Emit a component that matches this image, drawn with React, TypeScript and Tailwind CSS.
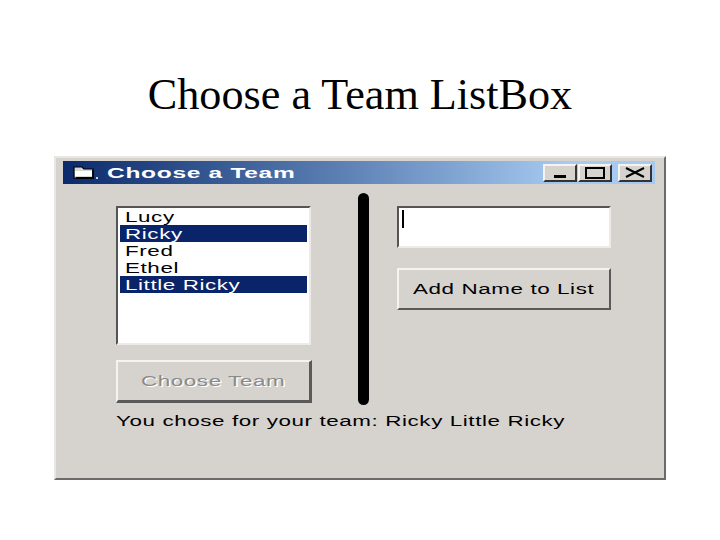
import React from "react";

const names = [
  { label: "Lucy", selected: false },
  { label: "Ricky", selected: true },
  { label: "Fred", selected: false },
  { label: "Ethel", selected: false },
  { label: "Little Ricky", selected: true },
];

const raised =
  "border-2 border-t-[#f4f3f0] border-l-[#f4f3f0] border-r-[#5a5a5a] border-b-[#5a5a5a] bg-[#d6d3cf]";
const sunken =
  "border-2 border-t-[#555555] border-l-[#555555] border-r-[#eeebe6] border-b-[#eeebe6] bg-white";
const font = "font-['Liberation_Sans',sans-serif] text-[14px]";
// the old dialog text is stretched sideways in the screenshot
const stretch = "inline-block whitespace-nowrap scale-x-[1.6] tracking-[0.37px]";

const CaptionButton = ({ children }: { children: React.ReactNode }) => (
  <div className={`flex h-[18px] w-[34px] items-center justify-center ${raised} border-b-[#333333] border-r-[#333333]`}>
    {children}
  </div>
);

const App = () => {
  return (
    <div className="h-[540px] w-[720px] overflow-hidden bg-white">
      <h1 className="pt-[66px] text-center font-['Liberation_Serif',serif] text-[44.2px] leading-[58px] text-black">
        Choose a Team ListBox
      </h1>

      <div className="ml-[54px] mt-[32px] h-[324px] w-[612px] border-2 border-t-[#e9e7e3] border-l-[#e9e7e3] border-r-[#6a6a6a] border-b-[#6a6a6a] bg-[#d6d3cf] pl-[7px] pr-[9px] pt-[3px]">
        {/* title bar */}
        <div className="flex h-[23px] items-center justify-between bg-gradient-to-r from-[#0c2a6b] to-[#a6caf0] to-85% pl-[10px] pr-[3px]">
          <div className="flex items-center gap-[9px]">
            <svg width="25" height="13" viewBox="0 0 25 13">
              <path d="M1 1h8l2 2h9v9H1z" fill="#d8d8d8" stroke="#000000" strokeWidth="1.2" />
              <path d="M2 5h17v5H2z" fill="#ffffff" />
              <path d="M20 4v8M3 12h18" stroke="#000000" strokeWidth="1.8" />
              <rect x="23" y="11" width="2" height="2" fill="#c8d0e0" />
            </svg>
            <span className={`${font} inline-block origin-left scale-x-[1.75] whitespace-nowrap font-bold leading-none tracking-[0.4px] text-white`}>
              Choose a Team
            </span>
          </div>
          <div className="flex items-center">
            <CaptionButton>
              <span className="mt-[8px] h-[3px] w-[12px] bg-black" />
            </CaptionButton>
            <div className="ml-[1px]">
              <CaptionButton>
                <span className="h-[12px] w-[20px] border-2 border-black" />
              </CaptionButton>
            </div>
            <div className="ml-[6px]">
              <CaptionButton>
                <svg width="22" height="11" viewBox="0 0 22 11">
                  <path d="M2 1l18 9M20 1L2 10" stroke="#000000" strokeWidth="2" />
                </svg>
              </CaptionButton>
            </div>
          </div>
        </div>

        {/* form body */}
        <div className="flex pl-[53px] pt-[9px]">
          <div className="w-[196px] pt-[13px]">
            <div className={`h-[139px] w-[195px] px-[2px] ${sunken}`}>
              {names.map((n) => (
                <div
                  key={n.label}
                  className={`h-[17px] pl-[5px] ${font} leading-[18px] ${
                    n.selected ? "bg-[#0a246a] text-white" : "text-black"
                  }`}
                >
                  <span className={`${stretch} origin-left`}>{n.label}</span>
                </div>
              ))}
            </div>
            <div
              className={`mt-[15px] flex h-[43px] items-center justify-center ${raised} border-r-[3px] border-b-[3px] ${font} text-[#8a8a86] [text-shadow:1px_1px_0_#ffffff]`}
            >
              <span className={stretch}>Choose Team</span>
            </div>
          </div>

          <div className="ml-[46px] h-[212px] w-[11px] rounded-full bg-black" />

          <div className="ml-[28px] w-[214px] pt-[13px]">
            <div className={`h-[42px] pl-[3px] pt-[2px] ${sunken}`}>
              <div className="h-[18px] w-[2px] bg-black" />
            </div>
            <div className={`mt-[20px] flex h-[42px] items-center justify-center ${raised} ${font} text-black`}>
              <span className={stretch}>Add Name to List</span>
            </div>
          </div>
        </div>

        <p className={`pl-[53px] pt-[7px] ${font} leading-[18px] text-black`}>
          <span className={`${stretch} origin-left`}>You chose for your team: Ricky Little Ricky</span>
        </p>
      </div>
    </div>
  );
};

export default App;
